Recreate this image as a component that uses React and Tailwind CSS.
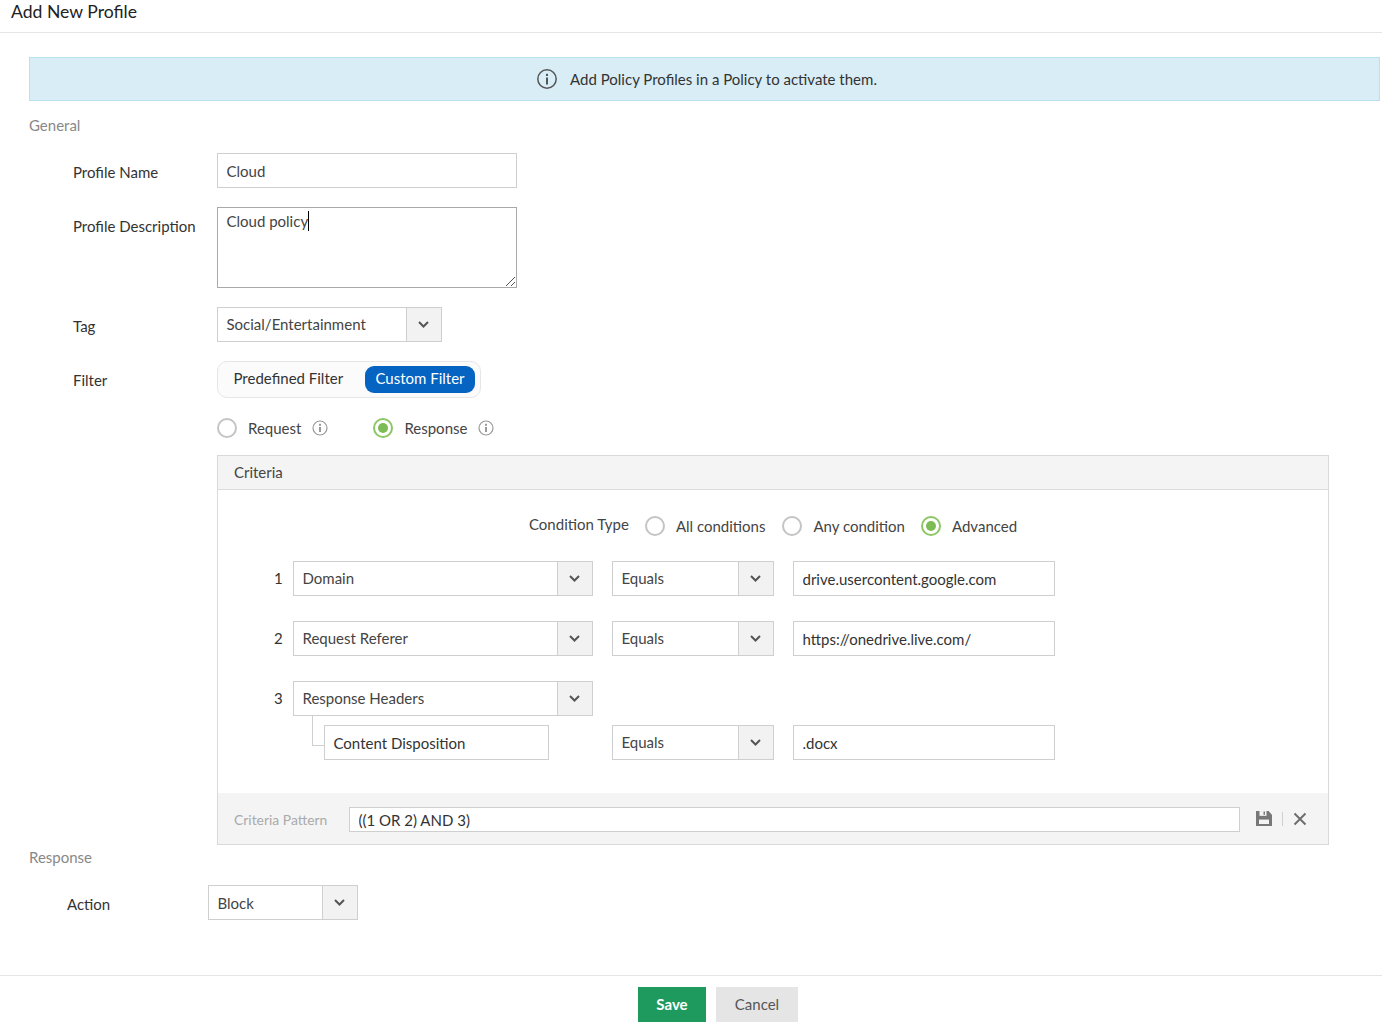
import React from "react";

const Chevron = () => (
  <svg width="11" height="7" viewBox="0 0 11 7" fill="none" stroke="#555" strokeWidth="2" className="mr-[2px]">
    <path d="M1 1l4.5 4.5L10 1" />
  </svg>
);

const Select = ({ value, className, textClass = "leading-[33px]" }) => (
  <div className={`flex h-[35px] shrink-0 border border-[#cfcfcf] bg-white text-[15px] text-[#444] ${className}`}>
    <div className={`flex-1 pl-[8.5px] whitespace-nowrap ${textClass}`}>{value}</div>
    <div className="flex w-[35px] items-center justify-center border-l border-[#cfcfcf] bg-[#f2f2f2]">
      <Chevron />
    </div>
  </div>
);

const Field = ({ value, className }) => (
  <input
    readOnly
    defaultValue={value}
    className={`h-[35px] shrink-0 border border-[#cfcfcf] bg-white pl-[8.5px] text-[15px] text-[#333] outline-none ${className}`}
  />
);

const Radio = ({ checked }) => (
  <span className={`flex h-[20px] w-[20px] shrink-0 items-center justify-center rounded-full border-2 bg-white ${checked ? "border-[#8cc665]" : "border-[#c4c4c4]"}`}>
    {checked && <span className="h-[10px] w-[10px] rounded-full bg-[#7dbb55]" />}
  </span>
);

const SmallInfo = () => (
  <svg width="16" height="16" viewBox="0 0 16 16" fill="none">
    <circle cx="8" cy="8" r="7" stroke="#9a9a9a" strokeWidth="1.2" />
    <rect x="7" y="7" width="2" height="5" fill="#9a9a9a" />
    <rect x="7" y="3.8" width="2" height="2" fill="#9a9a9a" />
  </svg>
);

const Row = ({ label, className, children }) => (
  <div className={`flex ${className}`}>
    <div className="w-[217px] shrink-0 pl-[73px] pt-[9px] text-[15px] leading-[20px] text-[#333] whitespace-nowrap">{label}</div>
    {children}
  </div>
);

export default function App() {
  return (
    <div className="relative h-[1031px] w-[1382px] overflow-hidden bg-white font-['Lato','Noto_Sans',sans-serif] text-[15px] text-[#333]">
      <header className="h-[33px] border-b border-[#e6e6e6] pl-[11px] text-[17.6px] leading-[23px] text-[#222]">Add New Profile</header>

      <div className="ml-[29px] mt-[24px] flex h-[44px] w-[1351px] items-center justify-center border border-[#b8e2f0] bg-[#d9edf6] pl-[4px] text-[15px] text-[#333]">
        <svg width="22" height="22" viewBox="0 0 22 22" fill="none" className="mr-[12px]">
          <circle cx="11" cy="11" r="9.2" stroke="#555" strokeWidth="1.5" />
          <rect x="10" y="9.5" width="2" height="7" fill="#555" />
          <rect x="10" y="5.8" width="2" height="2.2" fill="#555" />
        </svg>
        Add Policy Profiles in a Policy to activate them.
      </div>

      <div className="ml-[29px] mt-[14px] text-[15px] leading-[20px] text-[#888]">General</div>

      <Row label="Profile Name" className="mt-[18px]">
        <Field value="Cloud" className="w-[300px] text-[#444]" />
      </Row>

      <Row label="Profile Description" className="mt-[19px]">
        <div className="relative h-[81px] w-[300px]">
          <textarea
            readOnly
            defaultValue="Cloud policy"
            className="block h-[81px] w-[300px] resize-none border border-[#a9a9a9] bg-white px-[8.5px] py-[3px] text-[15px] leading-[20px] text-[#444] outline-none"
          />
          <span className="absolute left-[91px] top-[4px] h-[20px] w-px bg-black" />
          <svg width="11" height="11" viewBox="0 0 11 11" fill="none" stroke="#555" strokeWidth="1" className="absolute bottom-[1px] right-[1px]">
            <path d="M1 10L10 1M6 10l4-4" />
          </svg>
        </div>
      </Row>

      <Row label="Tag" className="mt-[19px]">
        <Select value="Social/Entertainment" className="w-[225px]" />
      </Row>

      <Row label="Filter" className="mt-[19px]">
        <div className="flex h-[37px] w-[264px] items-center rounded-[10px] border border-[#e6e6e6] bg-[#fbfbfb] pl-[15.5px] text-[15px] text-[#333]">
          <span className="w-[131.5px] pb-[2px] whitespace-nowrap">Predefined Filter</span>
          <span className="flex h-[27px] w-[110px] items-center justify-center rounded-[9px] bg-[#0563c1] pb-[2px] text-white">Custom Filter</span>
        </div>
      </Row>

      <div className="ml-[217px] mt-[20px] flex h-[20px] items-center text-[15px] text-[#444]">
        <Radio />
        <span className="ml-[11px]">Request</span>
        <span className="ml-[11px]"><SmallInfo /></span>
        <span className="ml-[45px]"><Radio checked /></span>
        <span className="ml-[11px]">Response</span>
        <span className="ml-[11px]"><SmallInfo /></span>
      </div>

      <section className="ml-[217px] mt-[17px] h-[390px] w-[1112px] border border-[#d9d9d9]">
        <div className="h-[34px] border-b border-[#dcdcdc] bg-[#f4f4f4] pl-[16px] leading-[33px] text-[#444]">Criteria</div>

        <div className="h-[303px] pl-[56px] pt-[26px]">
          <div className="ml-[255px] flex h-[20px] items-center text-[15px] text-[#444]">
            <span className="mr-[16px] -mt-[4px]">Condition Type</span>
            <Radio />
            <span className="ml-[11px]">All conditions</span>
            <span className="ml-[17px]"><Radio /></span>
            <span className="ml-[11px]">Any condition</span>
            <span className="ml-[16px]"><Radio checked /></span>
            <span className="ml-[11px]">Advanced</span>
          </div>

          <div className="mt-[25px] flex items-center">
            <span className="w-[19px] text-[15px] text-[#333]">1</span>
            <Select value="Domain" className="w-[300px]" />
            <Select value="Equals" className="ml-[19px] w-[162px]" />
            <Field value="drive.usercontent.google.com" className="ml-[19px] w-[262px]" />
          </div>
          <div className="mt-[25px] flex items-center">
            <span className="w-[19px] text-[15px] text-[#333]">2</span>
            <Select value="Request Referer" className="w-[300px]" />
            <Select value="Equals" className="ml-[19px] w-[162px]" />
            <Field value="https://onedrive.live.com/" className="ml-[19px] w-[262px]" />
          </div>
          <div className="mt-[25px] flex items-center">
            <span className="w-[19px] text-[15px] text-[#333]">3</span>
            <Select value="Response Headers" className="w-[300px]" />
          </div>
          <div className="relative mt-[9px] flex items-center pl-[50px]">
            <span className="absolute left-[38px] -top-[9px] h-[30px] w-[13px] border-b border-l border-[#cfcfcf]" />
            <Field value="Content Disposition" className="w-[225px] text-[#1f2937]" />
            <Select value="Equals" className="ml-[63px] w-[162px]" />
            <Field value=".docx" className="ml-[19px] w-[262px]" />
          </div>
        </div>

        <div className="flex h-[51px] items-center bg-[#f4f4f4] pl-[16px] pt-[2px]">
          <span className="mt-[2px] w-[115px] text-[13.9px] text-[#aaa]">Criteria Pattern</span>
          <input
            readOnly
            defaultValue="((1 OR 2) AND 3)"
            className="h-[25px] w-[891px] border border-[#cfcfcf] bg-white pl-[8.5px] text-[15px] text-[#333] outline-none"
          />
          <svg width="18" height="17" viewBox="0 0 18 16" preserveAspectRatio="none" className="ml-[14.5px] -mt-[2px]" fill="none">
            <path d="M1 1h12.5L17 4.5V15H1z" fill="#777" />
            <rect x="4.5" y="1" width="7" height="4.5" fill="#f4f4f4" />
            <rect x="8.5" y="1.5" width="1.5" height="3" fill="#777" />
            <rect x="4" y="9" width="10" height="4.2" fill="#f4f4f4" />
          </svg>
          <span className="ml-[9.5px] -mt-[2px] h-[14px] w-px bg-[#d0d0d0]" />
          <svg width="14" height="14" viewBox="0 0 14 14" className="ml-[10px] -mt-[2px]" fill="none" stroke="#6e6e6e" strokeWidth="2">
            <path d="M1.5 1.5l11 11M12.5 1.5l-11 11" />
          </svg>
        </div>
      </section>

      <div className="ml-[29px] mt-[2px] text-[15px] leading-[20px] text-[#888]">Response</div>

      <div className="mt-[18px] flex">
        <div className="w-[208px] shrink-0 pl-[67px] pt-[9px] text-[15px] leading-[20px] text-[#333]">Action</div>
        <Select value="Block" className="w-[150px]" textClass="leading-[34px]" />
      </div>

      <footer className="mt-[55px] flex justify-center gap-[10px] border-t border-[#e6e6e6] pl-[54px] pt-[11px]">
        <button className="h-[35px] w-[68px] bg-[#1f9a5f] text-[15px] font-bold text-white">Save</button>
        <button className="h-[35px] w-[82px] bg-[#e5e5e5] text-[15px] text-[#555]">Cancel</button>
      </footer>
    </div>
  );
}
